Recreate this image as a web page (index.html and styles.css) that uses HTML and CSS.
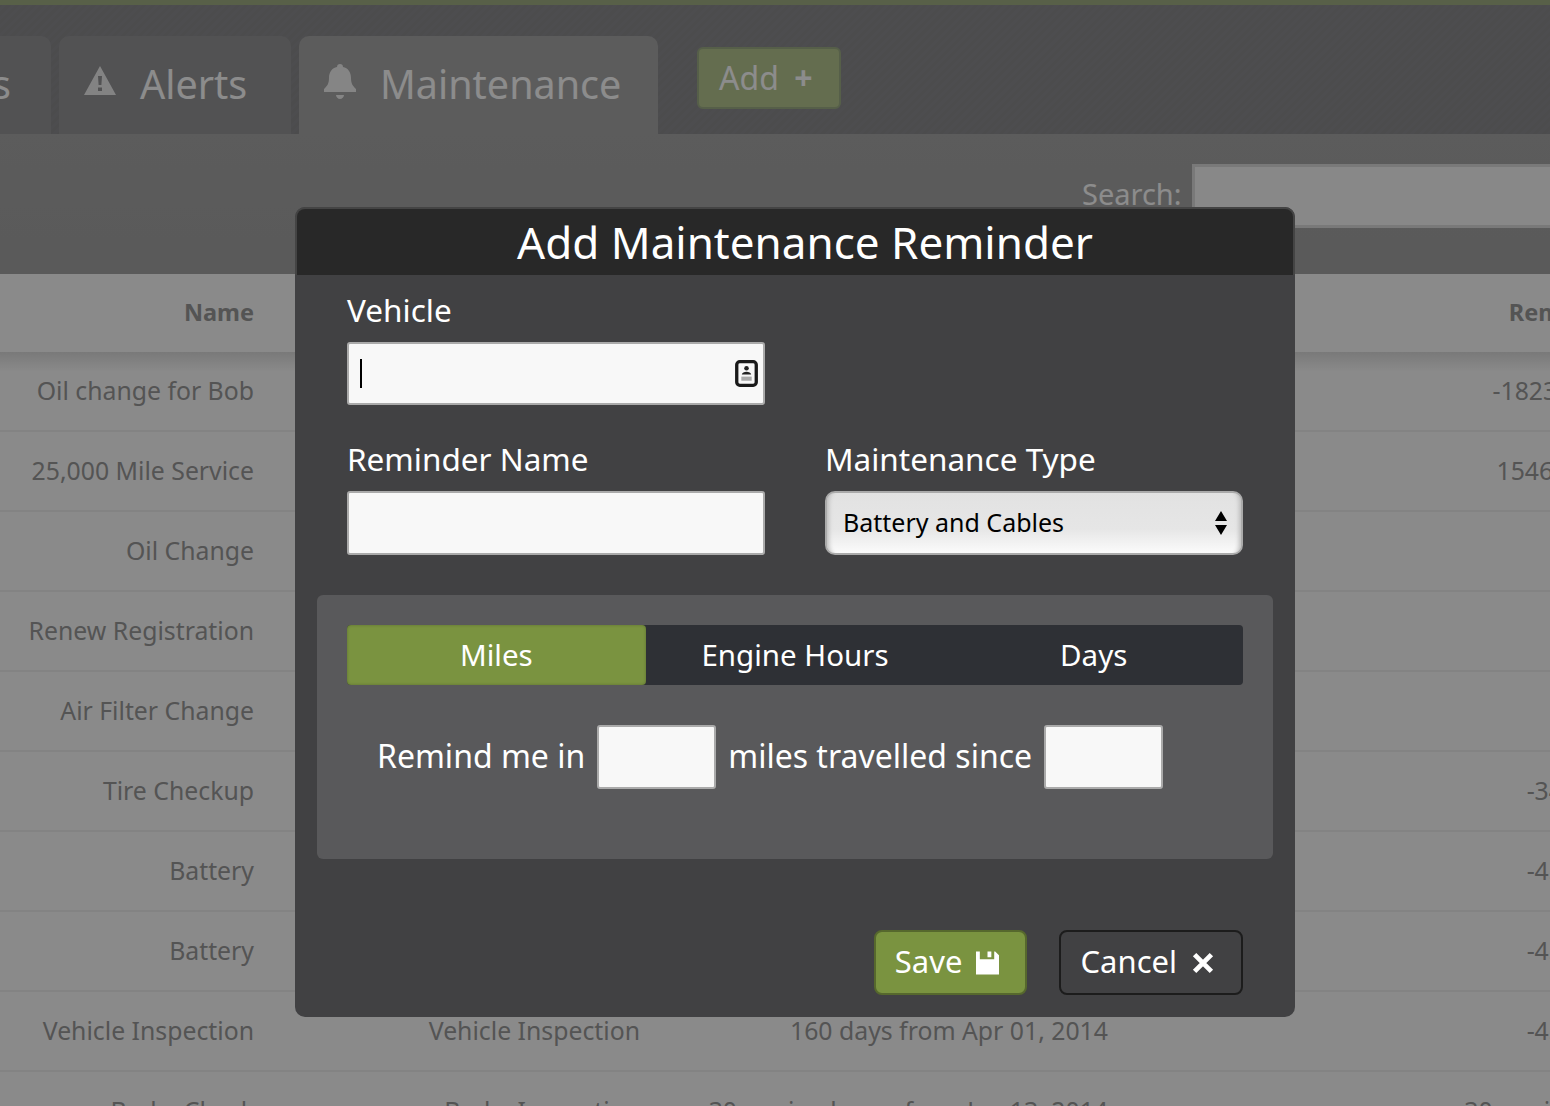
FILE: index.html
```html
<!DOCTYPE html>
<html lang="en">

<head>
    <meta charset="UTF-8">
    <title>Maintenance</title>
    <link rel="stylesheet" href="styles.css">
</head>

<body>
    <div class="topBar"></div>
    <nav class="tabBar">
        <a class="tab tabFirst">Reports</a>
        <a class="tab tabAlerts">
            <svg class="tabIcon" viewBox="0 0 32 32"><path fill-rule="evenodd" d="M16 1 L32 30 H0 Z M14 11 L14.6 20 H17.4 L18 11 Z M14 22.5 V26 H18 V22.5 Z" /></svg>
            Alerts
        </a>
        <a class="tab tabActive">
            <svg class="tabIcon" viewBox="0 0 32 36"><path d="M16 1 C18 1 19 2 19 4 C24 5 27 9 27 15 C27 21 29 23 32 26 V29 H0 V26 C3 23 5 21 5 15 C5 9 8 5 13 4 C13 2 14 1 16 1 Z M12 32 H20 C20 34 18 36 16 36 C14 36 12 34 12 32 Z" /></svg>
            Maintenance
        </a>
        <button class="addBtn">Add <span class="plus">+</span></button>
    </nav>
    <div class="searchBar">
        <label class="searchLabel">Search:</label>
        <input class="searchInput" type="text">
    </div>
    <table class="listTable">
        <thead>
            <tr>
                <th class="colName">Name</th>
                <th class="colType">Type</th>
                <th class="colDue">Due</th>
                <th class="colLeft">Remains</th>
            </tr>
        </thead>
        <tbody>
            <tr><td class="colName">Oil change for Bob</td><td></td><td></td><td class="colLeft">-1823 miles</td></tr>
            <tr><td class="colName">25,000 Mile Service</td><td></td><td></td><td class="colLeft">1546 miles</td></tr>
            <tr><td class="colName">Oil Change</td><td></td><td></td><td></td></tr>
            <tr><td class="colName">Renew Registration</td><td></td><td></td><td></td></tr>
            <tr><td class="colName">Air Filter Change</td><td></td><td></td><td></td></tr>
            <tr><td class="colName">Tire Checkup</td><td></td><td></td><td class="colLeft">-3420</td></tr>
            <tr><td class="colName">Battery</td><td></td><td></td><td class="colLeft">-4512</td></tr>
            <tr><td class="colName">Battery</td><td></td><td></td><td class="colLeft">-4512</td></tr>
            <tr><td class="colName">Vehicle Inspection</td><td class="colType">Vehicle Inspection</td><td class="colDue">160 days from Apr 01, 2014</td><td class="colLeft">-4512</td></tr>
            <tr><td class="colName">Brake Check</td><td class="colType">Brake Inspection</td><td class="colDue">30 engine hours from Jan 13, 2014</td><td class="colLeft">30 engine hours</td></tr>
        </tbody>
    </table>

    <div class="overlay"></div>

    <section class="modal">
        <h1 class="modalTitle">Add Maintenance Reminder</h1>
        <form class="modalForm">
            <div class="field">
                <label>Vehicle</label>
                <div class="fakeInput">
                    <span class="caret"></span>
                    <svg class="contactIcon" viewBox="0 0 22 26"><rect x="1.6" y="1.6" width="18.8" height="22.8" rx="3" fill="none" stroke="#1a1a1a" stroke-width="3.2" /><circle cx="11" cy="8" r="2.2" fill="#222" /><path d="M6.5 14 C7 10.5 15 10.5 15.5 14 Z" fill="#222" /><path d="M6 16 H16 V20 H6 Z" fill="#aaa" /></svg>
                </div>
            </div>
            <div class="fieldRow">
                <div class="field">
                    <label>Reminder Name</label>
                    <input class="textInput" type="text">
                </div>
                <div class="field">
                    <label>Maintenance Type</label>
                    <div class="selectBox">
                        Battery and Cables
                        <svg class="selectArrows" viewBox="0 0 12 24"><path d="M6 0 L12 10 H0 Z M0 14 H12 L6 24 Z" /></svg>
                    </div>
                </div>
            </div>
            <div class="intervalPanel">
                <div class="segments">
                    <span class="segment segmentOn">Miles</span>
                    <span class="segment">Engine Hours</span>
                    <span class="segment">Days</span>
                </div>
                <div class="remindRow">
                    <span class="remindText">Remind me in</span>
                    <input class="smallInput" type="text">
                    <span class="remindText">miles travelled since</span>
                    <input class="smallInput" type="text">
                </div>
            </div>
            <div class="actions">
                <button class="btn btnSave" type="button">Save
                    <svg class="btnIcon" viewBox="0 0 24 24"><path d="M0 0 H4 V8 H19 V0 H20 L24 4 V24 H0 Z M12 0 H16 V6 H12 Z" /></svg>
                </button>
                <button class="btn btnCancel" type="button">Cancel
                    <svg class="btnIcon btnX" viewBox="0 0 20 20"><path d="M3 3 L17 17 M17 3 L3 17" stroke="#fff" stroke-width="4" /></svg>
                </button>
            </div>
        </form>
    </section>
</body>

</html>
```

FILE: styles.css
```css
* {
    padding: 0;
    margin: 0;
    box-sizing: border-box;
}

html,
body {
    height: 1106px;
    overflow: hidden;
}

body {
    font-family: "Noto Sans", sans-serif;
    background-color: #fff;
    color: #999;
}

.topBar {
    height: 5px;
    background-color: #a0af83;
}

.tabBar {
    height: 129px;
    display: flex;
    align-items: flex-end;
    gap: 8px;
    margin-left: -150px;
    background-color: #8d8d90;
    background-image: repeating-linear-gradient(135deg, #8d8d90 0, #8d8d90 3px, #8a8a8d 3px, #8a8a8d 6px);
}

.tab {
    height: 98px;
    display: flex;
    align-items: center;
    gap: 24px;
    padding: 0 0 2px 25px;
    font-size: 39.5px;
    color: #fff;
    background-color: #969698;
    border-radius: 10px 10px 0 0;
}

.tabFirst {
    width: 201px;
    justify-content: flex-end;
    padding: 0 40px 2px 0;
}

.tabAlerts {
    width: 232px;
}

.tabActive {
    width: 359px;
    background-color: #a8a8a8;
}

.tabIcon {
    width: 32px;
    height: 36px;
    fill: #fff;
    opacity: 0.85;
    margin-top: -6px;
}

.addBtn {
    align-self: flex-start;
    margin: 42px 0 0 31px;
    width: 144px;
    height: 62px;
    padding: 0 0 2px 20px;
    text-align: left;
    font: 32px "Noto Sans", sans-serif;
    color: #fff;
    background-color: #b6c691;
    border: 2px solid #9dae86;
    border-radius: 6px;
}

.plus {
    margin-left: 7px;
    font-weight: bold;
}

.searchBar {
    height: 140px;
    display: flex;
    align-items: flex-start;
    padding: 30px 0 0 1082px;
    gap: 10px;
    background: linear-gradient(#a8a8a8, #a4a4a4);
}

.searchLabel {
    flex: none;
    width: 100px;
    font-size: 29px;
    color: #fff;
    margin-top: 10px;
}

.searchInput {
    flex: none;
    width: 500px;
    height: 64px;
    background-color: #f8f8f8;
    border: 3px solid #ddd;
}

.listTable {
    width: 1970px;
    table-layout: fixed;
    border-collapse: collapse;
    background-color: #fcfcfc;
    color: #999;
    font-size: 24.8px;
    white-space: nowrap;
}

.listTable th {
    height: 78px;
    padding-bottom: 3px;
    font-size: 23.5px;
    font-weight: bold;
    background-color: #fbfbfb;
}

.listTable td {
    height: 80px;
    padding-bottom: 2px;
    border-bottom: 2px solid #eee;
}

.listTable tbody tr:first-child td {
    height: 79px;
    background-image: linear-gradient(#ddd, #fcfcfc 20px);
}

.colName {
    width: 294px;
    text-align: right;
    padding-right: 40px;
}

.colType {
    width: 386px;
    text-align: right;
    padding-right: 40px;
}

.colDue {
    width: 468px;
    text-align: right;
    padding-right: 40px;
}

.colLeft {
    width: 822px;
    text-align: center;
}

.overlay {
    position: fixed;
    inset: 0;
    background-color: rgba(0, 0, 0, 0.45);
}

.modal {
    position: fixed;
    left: 295px;
    top: 207px;
    width: 1000px;
    height: 810px;
    background-color: #414143;
    color: #fff;
    border-radius: 10px;
}

.modalTitle {
    height: 68px;
    line-height: 66px;
    text-align: center;
    font-size: 44px;
    font-weight: normal;
    background-color: #282828;
    border: 2px solid #444;
    border-bottom: none;
    border-radius: 10px 10px 0 0;
    padding-left: 20px;
}

.modalForm {
    display: flex;
    flex-direction: column;
    padding: 14px 22px 0;
}

.field {
    display: flex;
    flex-direction: column;
    width: 418px;
    margin-left: 30px;
}

.field label {
    font-size: 31.5px;
    height: 53px;
    line-height: 41px;
}

.fakeInput {
    height: 63px;
    display: flex;
    align-items: center;
    justify-content: space-between;
    padding: 0 5px 0 11px;
    background-color: #f8f8f8;
    border: 2px solid #aaa;
    border-radius: 3px;
}

.caret {
    width: 2px;
    height: 29px;
    background-color: #000;
}

.contactIcon {
    width: 23px;
    height: 27px;
}

.fieldRow {
    display: flex;
    margin-top: 33px;
}

.fieldRow .field + .field {
    margin-left: 60px;
}

.textInput {
    height: 64px;
    background-color: #f8f8f8;
    border: 2px solid #aaa;
    border-radius: 3px;
}

.selectBox {
    height: 64px;
    display: flex;
    align-items: center;
    justify-content: space-between;
    padding: 0 14px 3px 16px;
    font-size: 25px;
    color: #000;
    background: linear-gradient(#e2e2e2, #e6e6e6 60%, #fbfbfb);
    border: 2px solid #aaa;
    border-radius: 10px;
    box-shadow: inset 7px 0 4px -5px #bbb, inset -7px 0 4px -5px #bbb;
}

.selectArrows {
    width: 12px;
    height: 24px;
    margin-top: 3px;
}

.intervalPanel {
    margin-top: 40px;
    height: 264px;
    padding: 30px;
    background-color: #59595b;
    border-radius: 6px;
    width: 956px;
}

.segments {
    display: flex;
    height: 60px;
    background-color: #2e3035;
    border-radius: 4px;
}

.segment {
    flex: 1;
    text-align: center;
    line-height: 59px;
    font-size: 29.5px;
}

.segmentOn {
    background-color: #7a9340;
    border-radius: 4px;
    box-shadow: inset 0 0 3px rgba(0, 0, 0, 0.25);
}

.remindRow {
    display: flex;
    align-items: center;
    gap: 12px;
    margin: 40px 0 0 30px;
    font-size: 32px;
}

.remindText {
    margin-bottom: 4px;
}

.smallInput {
    width: 119px;
    height: 64px;
    background-color: #f8f8f8;
    border: 2px solid #aaa;
    border-radius: 3px;
}

.actions {
    display: flex;
    justify-content: flex-end;
    gap: 32px;
    margin: 71px 30px 0 0;
}

.btn {
    height: 65px;
    display: flex;
    align-items: center;
    gap: 14px;
    padding: 0 26px 3px 19px;
    font: 31px "Noto Sans", sans-serif;
    color: #fff;
    border-radius: 8px;
}

.btnSave {
    background-color: #7a9340;
    border: 2px solid #56682d;
}

.btnCancel {
    background-color: #414143;
    border: 2px solid #1c1c1c;
}

.btnIcon {
    width: 23px;
    height: 24px;
    margin-top: 3px;
    fill: #fff;
}

.btnX {
    width: 24px;
}
```
